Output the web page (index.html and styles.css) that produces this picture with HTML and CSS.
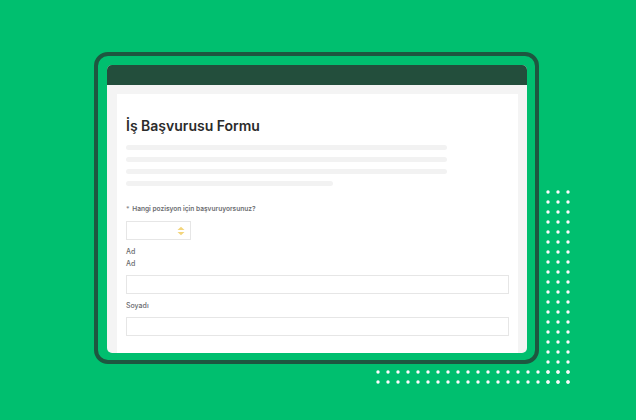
FILE: index.html
```html
<!DOCTYPE html>
<html lang="tr">
<head>
<meta charset="utf-8">
<link rel="stylesheet" href="styles.css">
</head>
<body>
<div class="stage">
  <svg class="dots" width="200" height="200" viewBox="0 0 200 200" aria-hidden="true">
    <defs>
      <pattern id="dp" x="0" y="0" width="10" height="10" patternUnits="userSpaceOnUse">
        <circle cx="2" cy="2" r="1.7" fill="#ffffff"/>
      </pattern>
    </defs>
    <rect x="170" y="0" width="30" height="200" fill="url(#dp)"/>
    <rect x="0" y="180" width="200" height="20" fill="url(#dp)"/>
  </svg>
  <div class="frame">
    <div class="card">
      <div class="card-head"></div>
      <div class="card-body">
        <div class="panel">
          <h1 class="title">İş Başvurusu Formu</h1>
          <div class="lines">
            <div class="line"></div>
            <div class="line"></div>
            <div class="line"></div>
            <div class="line short"></div>
          </div>
          <div class="q-label"><span class="star">*</span> Hangi pozisyon için başvuruyorsunuz?</div>
          <div class="select">
            <svg class="arrows" width="8" height="10" viewBox="0 0 8 10" aria-hidden="true">
              <path d="M0.5 4 L4 0.8 L7.5 4 Z" fill="#f3d57c"/>
              <path d="M0.5 6 L4 9.2 L7.5 6 Z" fill="#f3d57c"/>
            </svg>
          </div>
          <div class="lbl lbl-ad1">Ad</div>
          <div class="lbl lbl-ad2">Ad</div>
          <div class="input"></div>
          <div class="lbl lbl-soy">Soyadı</div>
          <div class="input"></div>
        </div>
      </div>
    </div>
  </div>
</div>
</body>
</html>
```

FILE: styles.css
```css
html, body {
  margin: 0;
  padding: 0;
}
body {
  width: 636px;
  height: 420px;
  background: #00bf6f;
  overflow: hidden;
  font-family: "Inter", "Noto Sans", "Liberation Sans", sans-serif;
}
.stage {
  position: relative;
  width: 636px;
  height: 420px;
  padding: 52px 0 0 94px;
  box-sizing: border-box;
}
.dots {
  position: absolute;
  left: 376px;
  top: 190px;
  z-index: 0;
}
.frame {
  position: relative;
  z-index: 1;
  width: 445px;
  height: 312px;
  box-sizing: border-box;
  border: 4px solid #1e5740;
  border-radius: 14px;
  background: #00bf6f;
  padding: 9px 8px 7px 9px;
}
.card {
  width: 420px;
  height: 288px;
  display: flex;
  flex-direction: column;
  border-radius: 5px;
  overflow: hidden;
  background: #f4f4f4;
}
.card-head {
  height: 20px;
  background: #234e3c;
  flex: none;
}
.card-body {
  flex: 1;
  padding: 9px 9px 0 10px;
  display: flex;
}
.panel {
  flex: 1;
  background: #ffffff;
  padding: 23px 9px 0 9px;
  display: flex;
  flex-direction: column;
  align-items: flex-start;
}
.title {
  margin: 0;
  font-size: 14px;
  line-height: 17px;
  font-weight: 600;
  color: #2b2b2b;
  letter-spacing: 0;
}
.lines {
  margin-top: 11px;
  display: flex;
  flex-direction: column;
  gap: 7px;
}
.line {
  width: 321px;
  height: 5px;
  border-radius: 3px;
  background: #f2f2f2;
}
.line.short {
  width: 207px;
}
.q-label {
  margin-top: 19px;
  font-size: 6.6px;
  line-height: 9px;
  font-weight: 600;
  color: #6c6d70;
}
.star {
  color: #8a8b8e;
  margin-right: 1px;
}
.select {
  margin-top: 7px;
  width: 65px;
  height: 19px;
  box-sizing: border-box;
  border: 1px solid #e6e6e6;
  display: flex;
  align-items: center;
  justify-content: flex-end;
  padding-right: 5px;
}
.lbl {
  font-size: 7px;
  line-height: 9px;
  color: #6b6c6f;
  font-weight: 500;
}
.lbl-ad1 {
  margin-top: 7px;
}
.lbl-ad2 {
  margin-top: 3px;
}
.input {
  margin-top: 7px;
  width: 383px;
  height: 19px;
  box-sizing: border-box;
  border: 1px solid #e6e6e6;
}
.lbl-soy {
  margin-top: 7px;
}
```
